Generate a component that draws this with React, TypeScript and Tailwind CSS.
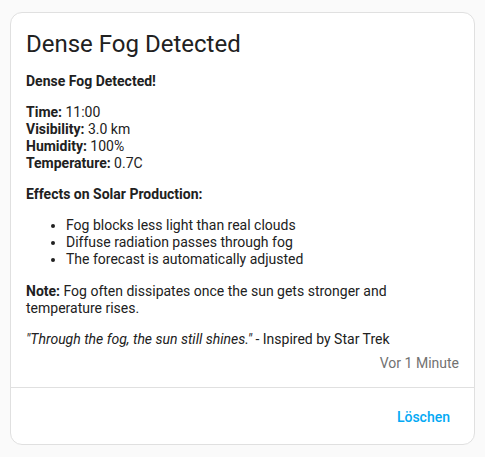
import React from "react";

export default function App() {
  return (
    <div
      className="min-h-[457px] w-full bg-[#fafafa] px-[10px] pt-[12px] text-[#212121]"
      style={{ fontFamily: "Roboto, 'Noto Sans', sans-serif" }}
    >
      <div className="w-[465px] rounded-[12px] border border-[#e0e0e0] bg-white">
        <div className="px-[15px] pt-[15px] text-[24px] leading-8 text-[#212121]">
          Dense Fog Detected
        </div>
        <div className="px-[15px] pb-[15px] text-[14px] leading-[17px]">
          <p className="mt-[13px] font-bold">Dense Fog Detected!</p>
          <p className="mt-[14px]">
            <b>Time:</b> 11:00
            <br />
            <b>Visibility:</b> 3.0 km
            <br />
            <b>Humidity:</b> 100%
            <br />
            <b>Temperature:</b> 0.7C
          </p>
          <p className="mt-[14px] font-bold">Effects on Solar Production:</p>
          <ul className="mt-[14px] list-disc pl-[40px]">
            <li>Fog blocks less light than real clouds</li>
            <li>Diffuse radiation passes through fog</li>
            <li>The forecast is automatically adjusted</li>
          </ul>
          <p className="mt-[15px]">
            <b>Note:</b> Fog often dissipates once the sun gets stronger and
            temperature rises.
          </p>
          <p className="mt-[14px]">
            <i>"Through the fog, the sun still shines."</i> - Inspired by Star
            Trek
          </p>
          <div className="mt-[7px] text-right text-[#727272]">Vor 1 Minute</div>
        </div>
        <div className="flex justify-end border-t border-[#e0e0e0] px-[16px] pb-[9px] pt-[11px]">
          <button className="h-[36px] px-[8px] text-[14px] font-medium leading-[36px] text-[#03a9f4]">
            Löschen
          </button>
        </div>
      </div>
    </div>
  );
}
